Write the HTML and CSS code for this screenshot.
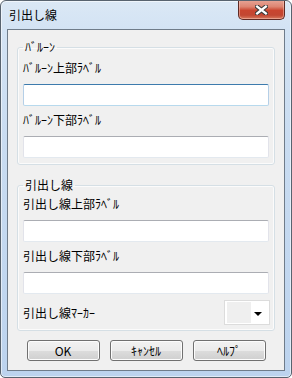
FILE: index.html
```html
<!DOCTYPE html>
<html lang="ja">
<head>
<meta charset="utf-8">
<title>引出し線</title>
<link rel="stylesheet" href="styles.css">
</head>
<body>
<div class="window">
  <div class="titlebar">
    <span class="title">引出し線</span>
    <div class="close">
      <svg width="13" height="10" viewBox="0 0 13 10">
        <path d="M2.2 1.6 L10.8 8.4 M10.8 1.6 L2.2 8.4" stroke="#3a3a3a" stroke-width="4.4" stroke-linecap="square" fill="none"/>
        <path d="M2.2 1.6 L10.8 8.4 M10.8 1.6 L2.2 8.4" stroke="#ffffff" stroke-width="2.4" stroke-linecap="square" fill="none"/>
      </svg>
    </div>
  </div>
  <div class="client">
    <fieldset class="group g1">
      <legend>ﾊﾞﾙｰﾝ</legend>
      <span class="lbl">ﾊﾞﾙｰﾝ上部ﾗﾍﾞﾙ</span>
      <div class="field focus"></div>
      <span class="lbl">ﾊﾞﾙｰﾝ下部ﾗﾍﾞﾙ</span>
      <div class="field"></div>
    </fieldset>
    <fieldset class="group g2">
      <legend>引出し線</legend>
      <span class="lbl">引出し線上部ﾗﾍﾞﾙ</span>
      <div class="field"></div>
      <span class="lbl">引出し線下部ﾗﾍﾞﾙ</span>
      <div class="field"></div>
      <div class="row">
        <span class="rowlbl">引出し線ﾏｰｶｰ</span>
        <div class="combo"><span class="swatch"></span><span class="arrow"></span></div>
      </div>
    </fieldset>
    <div class="buttons">
      <div class="btn">OK</div>
      <div class="btn">ｷｬﾝｾﾙ</div>
      <div class="btn">ﾍﾙﾌﾟ</div>
    </div>
  </div>
</div>
</body>
</html>
```
FILE: styles.css
```css
html, body {
  margin: 0;
  padding: 0;
}
body {
  width: 292px;
  height: 378px;
  font-family: "Noto Sans CJK JP", "Noto Sans", sans-serif;
  font-size: 12px;
  color: #000;
  background: #ffffff;
}
.window {
  box-sizing: border-box;
  width: 292px;
  height: 378px;
  border: 1px solid #58636f;
  border-radius: 6px 6px 5px 5px;
  background: linear-gradient(to bottom, #dbe8f5 0px, #d3e3f4 28px, #c9dcf1 140px, #bcd3ee 100%);
  box-shadow: inset 0 0 0 1px rgba(255, 255, 255, 0.55);
  display: flex;
  flex-direction: column;
  overflow: hidden;
}
.titlebar {
  flex: none;
  height: 28px;
  display: flex;
  align-items: flex-start;
}
.title {
  margin: 6px 0 0 8px;
  line-height: 16px;
}
.close {
  margin: -1px 6px 0 auto;
  width: 47px;
  height: 20px;
  box-sizing: border-box;
  border: 1px solid #5e2a24;
  border-top: none;
  border-radius: 0 0 5px 5px;
  background: linear-gradient(to bottom, #e7a698 0%, #dd8572 35%, #c9452f 55%, #c24732 80%, #d77a5e 100%);
  box-shadow: inset 0 0 0 1px rgba(255, 210, 200, 0.45);
  display: flex;
  align-items: center;
  justify-content: center;
}
.client {
  flex: 1;
  margin: 0 6px 6px;
  border: 1px solid #6f7c8a;
  background: #f0f0f0;
  padding: 9px 0 0;
  display: flex;
  flex-direction: column;
}
.group {
  margin: 0 9px;
  min-width: 0;
  border: 1px solid #d5dfe5;
  border-radius: 3px;
  padding: 5px 5px 0;
  box-shadow: inset 0 0 0 1px #fbfbfb;
}
.group legend {
  padding: 0 2px;
  line-height: 16px;
}
.g2 {
  margin-top: 12px;
  padding-top: 3px;
  padding-bottom: 5px;
}
.lbl {
  display: block;
  height: 16px;
  line-height: 16px;
  margin-bottom: 8px;
}
.field {
  box-sizing: border-box;
  height: 22px;
  background: #fff;
  border: 1px solid;
  border-color: #abadb3 #e2e3ea #e3e9ef;
  border-radius: 2px;
  margin-bottom: 6px;
}
.field.focus {
  border-color: #3d7bad #b5cfe7 #b7d9ed;
}
.row {
  display: flex;
  align-items: center;
  justify-content: space-between;
  height: 25px;
}
.rowlbl {
  line-height: 16px;
}
.combo {
  box-sizing: border-box;
  width: 46px;
  height: 25px;
  margin-right: -1px;
  border: 1px solid #dcdcdc;
  background: #fff;
  display: flex;
  align-items: center;
  padding: 1px 2px;
}
.swatch {
  width: 24px;
  height: 21px;
  background: #efefef;
}
.arrow {
  margin: 2px 5px 0 auto;
  width: 0;
  height: 0;
  border-left: 4px solid transparent;
  border-right: 4px solid transparent;
  border-top: 4px solid #000;
}
.buttons {
  display: flex;
  justify-content: center;
  gap: 10px;
  margin-top: 9px;
}
.btn {
  box-sizing: border-box;
  width: 73px;
  height: 21px;
  border: 1px solid #707070;
  border-radius: 3px;
  background: linear-gradient(to bottom, #f2f2f2 0%, #ebebeb 50%, #dddddd 50%, #cfcfcf 100%);
  box-shadow: inset 0 0 0 1px #fcfcfc;
  text-align: center;
  line-height: 19px;
}
```
